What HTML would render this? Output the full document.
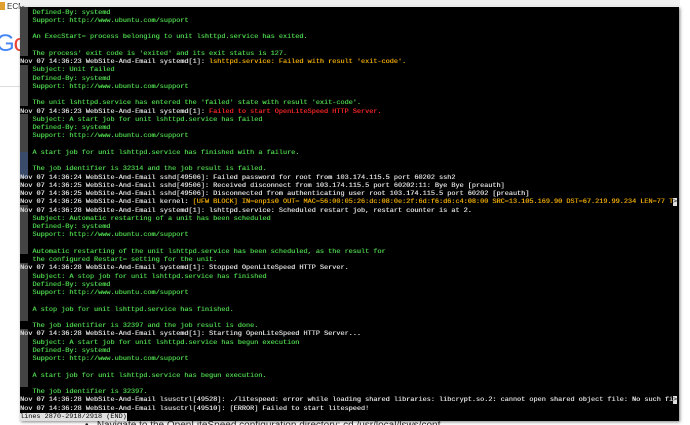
<!DOCTYPE html>
<html><head><style>
html,body{margin:0;padding:0;width:690px;height:425px;overflow:hidden;background:#fff;position:relative;font-family:"Liberation Sans",sans-serif}
.ecm{position:absolute;left:0;top:2px;font-size:8px;color:#333}
.ecm:before{content:"";display:inline-block;width:5px;height:8px;background:#e0a030;margin-right:2px;vertical-align:-1px}
.goo{position:absolute;left:-4px;top:30px;font-size:24px;letter-spacing:-1px}
.hline{position:absolute;left:0;top:86px;width:20px;height:1px;background:#ddd}
.topbar{position:absolute;left:20px;top:0;width:660px;height:6px;background:#f1f1f1}
.term{position:absolute;left:20px;top:7px;width:659px;height:414px;background:#000;box-shadow:1px 1px 3px rgba(0,0,0,.5);overflow:hidden}
pre{margin:0;padding:0;font-family:"Liberation Mono",monospace;font-size:6.85px;line-height:8.25px;color:#d8d8d8;white-space:pre;position:absolute;left:0;top:1.5px;text-shadow:0.3px 0 0 currentColor}
.g{color:#48c848}.o{color:#e4a400}.r{color:#ee2424}
.gut{position:absolute;left:0;width:8px;background:#444}
.blue{position:absolute;left:0;top:145px;width:8px;height:26px;background:#3a4a6a}
.end{background:#e0e0e0;color:#000;text-shadow:none}
.bottom{position:absolute;left:85px;top:420px;font-size:10px;color:#222;white-space:nowrap}
</style></head><body>
<div class="ecm">ECM</div>
<div class="goo"><span style="color:#4285f4">G</span><span style="color:#ea4335">o</span><span style="color:#fbbc05">o</span></div>
<div class="hline"></div>
<div class="topbar"></div>
<div class="term">
<div class="gut" style="top:0;height:49px"></div>
<div class="gut" style="top:58px;height:41px"></div>
<div class="gut" style="top:107px;height:58px"></div>
<div class="gut" style="top:198px;height:49px"></div>
<div class="gut" style="top:256px;height:58px"></div>
<div class="gut" style="top:322px;height:58px"></div>
<div class="blue"></div>
<pre><span class="g">   Defined-By: systemd
   Support: http://www.ubuntu.com/support

   An ExecStart= process belonging to unit lshttpd.service has exited.

   The process' exit code is 'exited' and its exit status is 127.</span>
Nov 07 14:36:23 WebSite-And-Email systemd[1]: <span class="o">lshttpd.service: Failed with result 'exit-code'.</span>
<span class="g">   Subject: Unit failed
   Defined-By: systemd
   Support: http://www.ubuntu.com/support

   The unit lshttpd.service has entered the 'failed' state with result 'exit-code'.</span>
Nov 07 14:36:23 WebSite-And-Email systemd[1]: <span class="r">Failed to start OpenLiteSpeed HTTP Server.</span>
<span class="g">   Subject: A start job for unit lshttpd.service has failed
   Defined-By: systemd
   Support: http://www.ubuntu.com/support

   A start job for unit lshttpd.service has finished with a failure.

   The job identifier is 32314 and the job result is failed.</span>
Nov 07 14:36:24 WebSite-And-Email sshd[49506]: Failed password for root from 103.174.115.5 port 60202 ssh2
Nov 07 14:36:25 WebSite-And-Email sshd[49506]: Received disconnect from 103.174.115.5 port 60202:11: Bye Bye [preauth]
Nov 07 14:36:25 WebSite-And-Email sshd[49506]: Disconnected from authenticating user root 103.174.115.5 port 60202 [preauth]
Nov 07 14:36:26 WebSite-And-Email kernel: <span class="o">[UFW BLOCK] IN=enp1s0 OUT= MAC=56:00:05:26:dc:08:0e:2f:6d:f6:d6:c4:08:00 SRC=13.105.169.90 DST=67.219.99.234 LEN=77 T</span><span class="end">&gt;</span>
Nov 07 14:36:28 WebSite-And-Email systemd[1]: lshttpd.service: Scheduled restart job, restart counter is at 2.
<span class="g">   Subject: Automatic restarting of a unit has been scheduled
   Defined-By: systemd
   Support: http://www.ubuntu.com/support

   Automatic restarting of the unit lshttpd.service has been scheduled, as the result for
   the configured Restart= setting for the unit.</span>
Nov 07 14:36:28 WebSite-And-Email systemd[1]: Stopped OpenLiteSpeed HTTP Server.
<span class="g">   Subject: A stop job for unit lshttpd.service has finished
   Defined-By: systemd
   Support: http://www.ubuntu.com/support

   A stop job for unit lshttpd.service has finished.

   The job identifier is 32397 and the job result is done.</span>
Nov 07 14:36:28 WebSite-And-Email systemd[1]: Starting OpenLiteSpeed HTTP Server...
<span class="g">   Subject: A start job for unit lshttpd.service has begun execution
   Defined-By: systemd
   Support: http://www.ubuntu.com/support

   A start job for unit lshttpd.service has begun execution.

   The job identifier is 32397.</span>
Nov 07 14:36:28 WebSite-And-Email lsusctrl[49528]: ./litespeed: error while loading shared libraries: libcrypt.so.2: cannot open shared object file: No such fi<span class="end">&gt;</span>
Nov 07 14:36:28 WebSite-And-Email lsusctrl[49510]: [ERROR] Failed to start litespeed!
<span class="end">lines 2870-2918/2918 (END)</span></pre>
</div>
<div class="bottom">•&nbsp;&nbsp;&nbsp;Navigate to the OpenLiteSpeed configuration directory: cd /usr/local/lsws/conf</div>
</body></html>
